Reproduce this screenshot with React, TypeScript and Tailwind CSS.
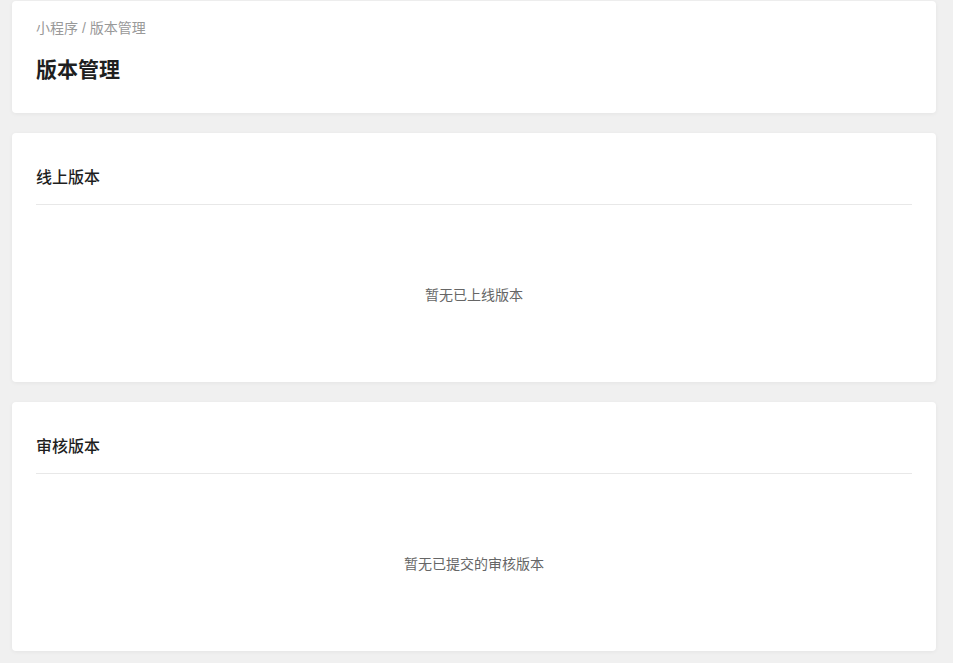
export default function App() {
  return (
    <div
      className="min-h-screen bg-[#f0f0f0] pt-[1px] pl-[12px] pr-[17px] pb-[12px]"
      style={{ fontFamily: '"Liberation Sans", "Noto Sans CJK SC", sans-serif' }}
    >
      <div className="flex flex-col gap-[20px]">
        {/* Page header */}
        <div className="h-[112px] rounded-[4px] bg-white px-[24px] pt-[16px] shadow-[0_1px_4px_rgba(0,0,0,0.05)]">
          <div className="text-[14px] leading-[22px] text-[#999999]">小程序 / 版本管理</div>
          <h1 className="mt-[17px] text-[21px] font-bold leading-[28px] text-[#1f1f1f]">版本管理</h1>
        </div>

        <Section title="线上版本" empty="暂无已上线版本" />
        <Section title="审核版本" empty="暂无已提交的审核版本" />
      </div>
    </div>
  );
}

function Section({ title, empty }: { title: string; empty: string }) {
  return (
    <div className="flex h-[249px] flex-col rounded-[4px] bg-white px-[24px] shadow-[0_1px_4px_rgba(0,0,0,0.05)]">
      <div className="border-b border-[#e8e8e8] pt-[33px] pb-[14px]">
        <h2 className="text-[16px] font-medium leading-[24px] text-[#1f1f1f]">{title}</h2>
      </div>
      <div className="flex flex-1 items-center justify-center pt-[4px] text-[14px] text-[#666666]">{empty}</div>
    </div>
  );
}
